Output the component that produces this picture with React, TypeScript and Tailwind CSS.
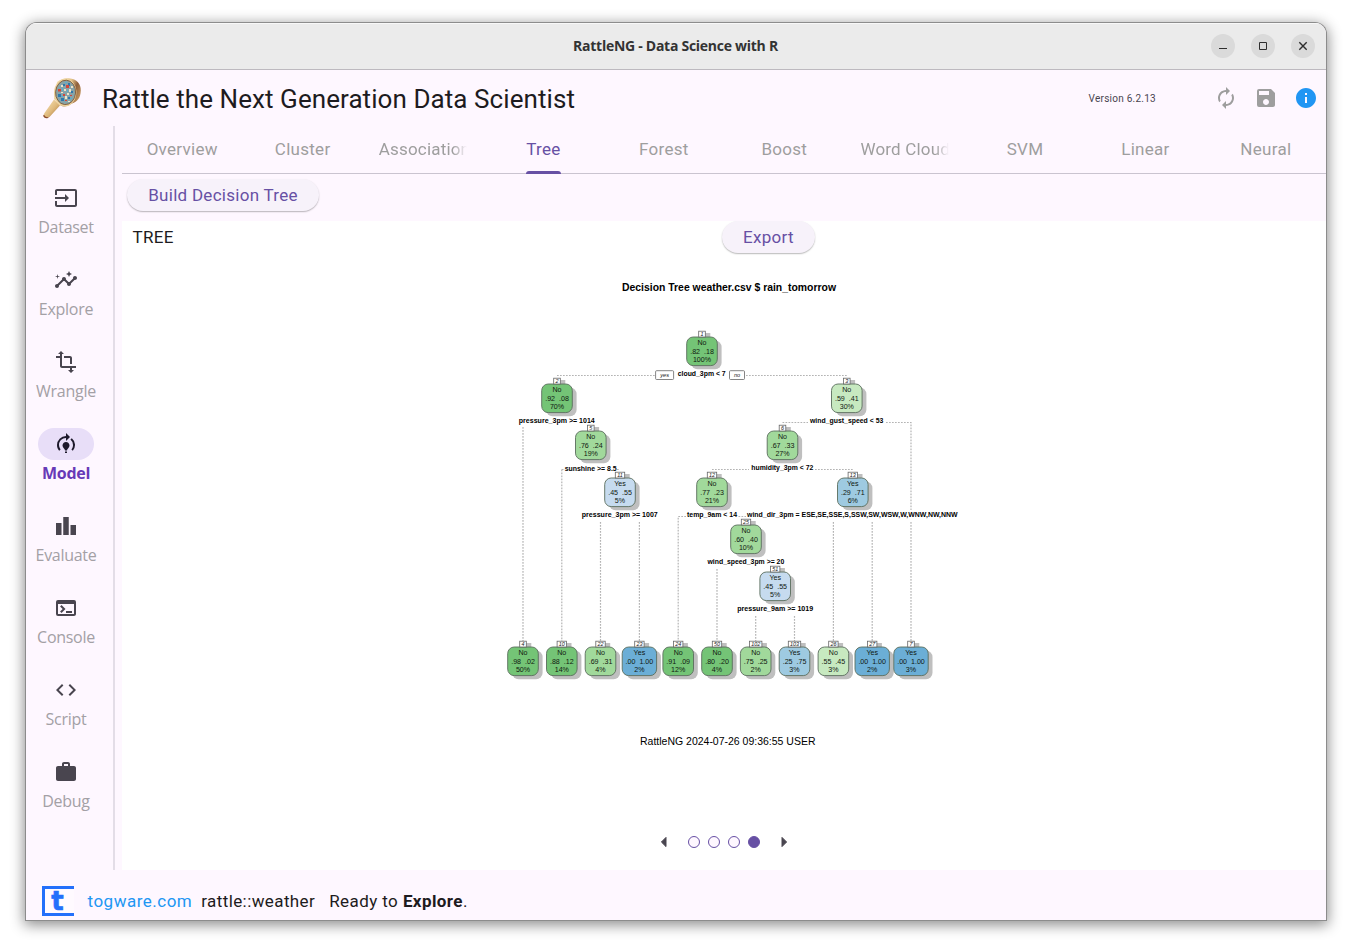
import React from "react";
import type { IconType } from "react-icons";
import {
  MdInput,
  MdInsights,
  MdTransform,
  MdModelTraining,
  MdLeaderboard,
  MdTerminal,
  MdCode,
  MdWork,
  MdAutorenew,
  MdSave,
  MdInfo,
} from "react-icons/md";

const rail: { label: string; icon: IconType; active?: boolean }[] = [
  { label: "Dataset", icon: MdInput },
  { label: "Explore", icon: MdInsights },
  { label: "Wrangle", icon: MdTransform },
  { label: "Model", icon: MdModelTraining, active: true },
  { label: "Evaluate", icon: MdLeaderboard },
  { label: "Console", icon: MdTerminal },
  { label: "Script", icon: MdCode },
  { label: "Debug", icon: MdWork },
];

const tabs = ["Overview", "Cluster", "Association", "Tree", "Forest", "Boost", "Word Cloud", "SVM", "Linear", "Neural"];

const G1 = "#74c476";
const G2 = "#a1d99b";
const G3 = "#c7e9c0";
const B1 = "#6baed6";
const B2 = "#9ecae1";
const B3 = "#c6dbef";

type TreeNode = { id: string; x: number; y: number; cls: string; prob: string; pct: string; fill: string; wide?: boolean };

const nodes: TreeNode[] = [
  { id: "1", x: 702, y: 337, cls: "No", prob: ".82\u00a0\u00a0.18", pct: "100%", fill: G1 },
  { id: "2", x: 557, y: 384, cls: "No", prob: ".92\u00a0\u00a0.08", pct: "70%", fill: G1 },
  { id: "3", x: 846.8, y: 384, cls: "No", prob: ".59\u00a0\u00a0.41", pct: "30%", fill: G3 },
  { id: "5", x: 590.8, y: 431, cls: "No", prob: ".76\u00a0\u00a0.24", pct: "19%", fill: G2 },
  { id: "6", x: 782.5, y: 431, cls: "No", prob: ".67\u00a0\u00a0.33", pct: "27%", fill: G2 },
  { id: "11", x: 620, y: 478, cls: "Yes", prob: ".45\u00a0\u00a0.55", pct: "5%", fill: B3 },
  { id: "12", x: 712, y: 478, cls: "No", prob: ".77\u00a0\u00a0.23", pct: "21%", fill: G2 },
  { id: "13", x: 852.8, y: 478, cls: "Yes", prob: ".29\u00a0\u00a0.71", pct: "6%", fill: B2 },
  { id: "25", x: 746, y: 525, cls: "No", prob: ".60\u00a0\u00a0.40", pct: "10%", fill: G2 },
  { id: "51", x: 775.2, y: 572, cls: "Yes", prob: ".45\u00a0\u00a0.55", pct: "5%", fill: B3 },
  { id: "4", x: 523, y: 647, cls: "No", prob: ".98\u00a0\u00a0.02", pct: "50%", fill: G1 },
  { id: "10", x: 561.8, y: 647, cls: "No", prob: ".88\u00a0\u00a0.12", pct: "14%", fill: G1 },
  { id: "22", x: 600.5, y: 647, cls: "No", prob: ".69\u00a0\u00a0.31", pct: "4%", fill: G2 },
  { id: "23", x: 639.4, y: 647, cls: "Yes", prob: ".00\u00a0\u00a01.00", pct: "2%", fill: B1, wide: true },
  { id: "24", x: 678.2, y: 647, cls: "No", prob: ".91\u00a0\u00a0.09", pct: "12%", fill: G1 },
  { id: "50", x: 717, y: 647, cls: "No", prob: ".80\u00a0\u00a0.20", pct: "4%", fill: G1 },
  { id: "102", x: 755.7, y: 647, cls: "No", prob: ".75\u00a0\u00a0.25", pct: "2%", fill: G2 },
  { id: "103", x: 794.5, y: 647, cls: "Yes", prob: ".25\u00a0\u00a0.75", pct: "3%", fill: B2 },
  { id: "26", x: 833.4, y: 647, cls: "No", prob: ".55\u00a0\u00a0.45", pct: "3%", fill: G3 },
  { id: "27", x: 872.2, y: 647, cls: "Yes", prob: ".00\u00a0\u00a01.00", pct: "2%", fill: B1, wide: true },
  { id: "7", x: 911, y: 647, cls: "Yes", prob: ".00\u00a0\u00a01.00", pct: "3%", fill: B1, wide: true },
];

const splits = [
  { text: "cloud_3pm < 7", x: 677.7, y: 376.3, w: 48 },
  { text: "pressure_3pm >= 1014", x: 518.8, y: 423, w: 76 },
  { text: "wind_gust_speed < 53", x: 810, y: 423.2, w: 73.3 },
  { text: "sunshine >= 8.5", x: 564.7, y: 470.7, w: 52 },
  { text: "humidity_3pm < 72", x: 751.3, y: 470.3, w: 62 },
  { text: "pressure_3pm >= 1007", x: 581.8, y: 517, w: 76 },
  { text: "temp_9am < 14", x: 687, y: 517, w: 50 },
  { text: "wind_dir_3pm = ESE,SE,SSE,S,SSW,SW,WSW,W,WNW,NW,NNW", x: 747, y: 517.2, w: 210.6 },
  { text: "wind_speed_3pm >= 20", x: 707.5, y: 564.3, w: 76.7 },
  { text: "pressure_9am >= 1019", x: 737.2, y: 611, w: 76 },
];

const edges = [
  "M557 375.5H655",
  "M746 375.5H847",
  "M523 427V641",
  "M782.5 422.5H808",
  "M886 422.5H911V510",
  "M911 522V641",
  "M561.8 469.5V641",
  "M561.8 469.5H565",
  "M617 469.5H620",
  "M712 469.5H749",
  "M815 469.5H853",
  "M600.5 522V641",
  "M639.4 522V641",
  "M686 516.5H678.2V641",
  "M738.5 516.5H746",
  "M833.4 522V641",
  "M872.2 522V641",
  "M717 569V641",
  "M755.7 616V641",
  "M794.5 616V641",
];

function TreePlot() {
  return (
    <svg width="1204" height="490" viewBox="122 270 1204 490" fontFamily="'Liberation Sans', Arial, sans-serif" className="block">
      <text x="622" y="291" fontSize="10.6" fontWeight="700" textLength="214" lengthAdjust="spacingAndGlyphs">
        Decision Tree weather.csv $ rain_tomorrow
      </text>
      <g fill="none" stroke="#b4b4b4" strokeWidth="1.2" strokeDasharray="1.7 1.3">
        {edges.map((d) => (
          <path key={d} d={d} />
        ))}
      </g>
      {nodes.map((n) => {
        const w = n.wide ? 34.4 : 30.6;
        const tag = n.id.length === 1 ? 6.6 : n.id.length === 2 ? 9.4 : 12.4;
        return (
          <g key={n.id} textAnchor="middle">
            <rect x={n.x - w / 2 + 4.3} y={n.y + 3.6} width={w} height="28.6" rx="6.5" fill="#bfbfbf" />
            <rect x={n.x - tag / 2 + 5} y={n.y - 4} width={tag} height="5" fill="#bfbfbf" />
            <rect x={n.x - w / 2} y={n.y} width={w} height="28.6" rx="6.5" fill={n.fill} stroke="#5a6d5c" strokeWidth="0.9" />
            <rect x={n.x - tag / 2} y={n.y - 5.8} width={tag} height="5.8" fill="#fff" stroke="#666" strokeWidth="0.8" />
            <text x={n.x} y={n.y - 1} fontSize="5.4" fontStyle="italic" fill="#222">
              {n.id}
            </text>
            <g fontSize="7.1" fill="#101810">
              <text x={n.x} y={n.y + 8.2}>{n.cls}</text>
              <text x={n.x} y={n.y + 16.6}>{n.prob}</text>
              <text x={n.x} y={n.y + 24.9}>{n.pct}</text>
            </g>
          </g>
        );
      })}
      {[
        { t: "yes", x: 655.6, w: 18 },
        { t: "no", x: 729.5, w: 15 },
      ].map((b) => (
        <g key={b.t}>
          <rect x={b.x} y="370.7" width={b.w} height="8.8" rx="1" fill="#fff" stroke="#666" strokeWidth="0.8" />
          <text x={b.x + b.w / 2} y="376.6" fontSize="5.6" fontStyle="italic" textAnchor="middle" fill="#222">
            {b.t}
          </text>
        </g>
      ))}
      <g fontSize="6.9" fontWeight="700">
        {splits.map((s) => (
          <text key={s.text} x={s.x} y={s.y} textLength={s.w} lengthAdjust="spacingAndGlyphs">
            {s.text}
          </text>
        ))}
      </g>
      <text x="640" y="745" fontSize="10.6" textLength="175.5" lengthAdjust="spacingAndGlyphs">
        RattleNG 2024-07-26 09:36:55 USER
      </text>
    </svg>
  );
}

function Magnifier() {
  return (
    <svg width="40" height="42" viewBox="42 77 40 42">
      <defs>
        <linearGradient id="rim" x1="0" y1="0" x2="1" y2="0.5">
          <stop offset="0" stopColor="#f6e6bf" />
          <stop offset="0.55" stopColor="#e3c388" />
          <stop offset="0.78" stopColor="#8d5f3b" />
          <stop offset="1" stopColor="#bb8d58" />
        </linearGradient>
        <linearGradient id="grip" x1="0" y1="0" x2="1" y2="1">
          <stop offset="0" stopColor="#fbeac2" />
          <stop offset="0.55" stopColor="#dfb97c" />
          <stop offset="1" stopColor="#95652f" />
        </linearGradient>
      </defs>
      <path d="M54 99.5L60 105.5L49.5 117Q46 118.8 43.8 116.6Q42.8 114.6 45 112.3Z" fill="url(#grip)" />
      <path d="M44 114.8Q45.5 117.8 49 117.3L47.4 118.3Q43.8 118.8 43.2 115.6Z" fill="#8c4b2c" />
      <path d="M57 82Q62 77.6 69 78.3C77 79 81 84 80.8 90.5C80.5 98 77.5 101.5 72 103.6Q65 108 60.5 105.6L54 99Z" fill="url(#rim)" />
      <ellipse cx="65.2" cy="92.6" rx="11.2" ry="13.8" transform="rotate(4 65.2 92.6)" fill="#ecd19b" />
      <ellipse cx="65.6" cy="92.4" rx="10" ry="12.2" transform="rotate(4 65.6 92.4)" fill="#87a3a8" stroke="#7d5a38" strokeWidth="0.9" />
      <g fill="#2f78ad">
        <path d="M58 94h3v3h-3zM61 98h3v3h-3zM68 83h2v3h-2zM63 84h2v2h-2zM71 91h2v2h-2zM68 97h2v2h-2z" />
      </g>
      <g fill="#d2463a">
        <path d="M58 89h3v2.5h-3zM66 85h3v3h-3zM63 94h2v2h-2zM70 95h2v1h-2zM65 100h2v1h-2z" />
      </g>
      <g fill="#eee3c9">
        <path d="M61 85h2v2h-2zM64 89h2v2h-2zM69 89h2v3h-2zM65 96h2v3h-2zM71 86h2v2h-2zM61 92h2v1h-2zM68 101h2v1h-2zM67 93h2v2h-2z" />
      </g>
      <g fill="#55b0d4">
        <path d="M62 88h1v3h-1zM67 90h1v2h-1zM61 96h2v1h-2zM70 98h2v1h-2zM65 82h2v1h-2z" />
      </g>
    </svg>
  );
}

function PagerArrow({ d }: { d: string }) {
  return (
    <svg width="24" height="24" viewBox="0 0 24 24" fill="#49454f" stroke="#49454f" strokeWidth="1" strokeLinejoin="round">
      <path d={d} />
    </svg>
  );
}

function WindowButton({ children }: { children: React.ReactNode }) {
  return (
    <div className="flex size-6 items-center justify-center rounded-full bg-[#dadada]">
      <svg width="24" height="24" viewBox="0 0 24 24" fill="none" stroke="#2e2e2e">
        {children}
      </svg>
    </div>
  );
}

function TitleBar() {
  return (
    <div className="flex h-[47px] shrink-0 items-center border-b border-[#bdb9bf] bg-[#ebebeb] pr-[11px] shadow-[inset_0_1px_0_#f8f8f8]">
      <div className="w-[114px]" />
      <div className="flex-1 pb-[2px] text-center font-['Open_Sans','Noto_Sans',sans-serif] text-[14px] font-bold tracking-[-0.27px] text-[#333]">
        RattleNG - Data Science with R
      </div>
      <div className="flex w-[104px] gap-4">
        <WindowButton>
          <path d="M8 14.5h8" />
        </WindowButton>
        <WindowButton>
          <path d="M8.5 8.5h7v7h-7z" />
        </WindowButton>
        <WindowButton>
          <path d="M8.3 8.3l7.4 7.4M15.7 8.3l-7.4 7.4" strokeWidth="1.4" />
        </WindowButton>
      </div>
    </div>
  );
}

export default function App() {
  return (
    <div className="h-[949px] w-[1352px] overflow-hidden bg-white px-[26px] pt-[23px] font-[Roboto,sans-serif] text-[#1d1b20]">
      <div className="flex h-[897px] w-[1300px] flex-col overflow-hidden rounded-t-[11px] bg-[#fef7ff] shadow-[0_0_0_1px_#8c8c8c,0_3px_14px_2px_rgba(0,0,0,0.45)]">
        <TitleBar />
        <header className="flex h-14 shrink-0 items-center pr-2 pl-4">
          <Magnifier />
          <h1 className="ml-5 flex-1 pt-[2px] text-[26px] leading-8 tracking-[0.07px] whitespace-nowrap">
            Rattle the Next Generation Data Scientist
          </h1>
          <span className="mr-[58px] text-[10px] tracking-[0.25px] whitespace-nowrap text-[#49454f]">Version 6.2.13</span>
          <div className="flex items-center gap-4">
            <MdAutorenew size={24} color="#9e9e9e" />
            <MdSave size={24} color="#9e9e9e" />
            <MdInfo size={24} color="#2196f3" />
          </div>
        </header>
        <div className="flex h-[744px] shrink-0">
          <nav className="flex w-[89px] shrink-0 flex-col border-r-2 border-[#e3dde7] pt-14 pr-[7px]">
            {rail.map(({ label, icon: Icon, active }) => (
              <div key={label} className="flex h-[82px] shrink-0 flex-col items-center">
                <div className={`flex h-8 w-14 items-center justify-center rounded-full ${active ? "bg-[#e8def8] text-[#1d192b]" : "text-[#49454f]"}`}>
                  <Icon size={24} />
                </div>
                <span
                  className={`mt-[3px] font-['Open_Sans','Noto_Sans',sans-serif] text-[16px] leading-5 ${active ? "font-bold tracking-[-0.3px] text-[#673ab7]" : "font-normal tracking-[-0.28px] text-[#a3a0a5]"}`}
                >
                  {label}
                </span>
              </div>
            ))}
          </nav>
          <main className="ml-[7px] flex w-[1204px] flex-col">
            <div className="flex h-12 shrink-0 border-b border-[#cac4d0]">
              {tabs.map((tab) => {
                const active = tab === "Tree";
                const fades = tab === "Association" || tab === "Word Cloud";
                return (
                  <div key={tab} className={`flex min-w-0 flex-1 px-4 ${fades ? "justify-start" : "justify-center"}`}>
                    <div className={`flex h-12 flex-col ${fades ? "w-full overflow-hidden [mask-image:linear-gradient(to_right,#000_84%,transparent)]" : ""}`}>
                      <span
                        className={`h-[45px] text-[17px] leading-[47px] whitespace-nowrap ${fades ? "tracking-[0.18px]" : "tracking-[0.28px]"} ${active ? "text-[#6750a4]" : "text-[#9e9e9e]"}`}
                      >
                        {tab}
                      </span>
                      {active && <span className="h-[3px] rounded-t-[3px] bg-[#6750a4]" />}
                    </div>
                  </div>
                );
              })}
            </div>
            <div className="h-[47px] shrink-0 pt-[5px] pl-[5px]">
              <button className="h-8 w-48 rounded-full bg-[#f7f2fa] text-[17px] leading-8 tracking-[0.28px] text-[#6750a4] shadow-[0_1px_1.5px_rgba(0,0,0,0.28)]">
                Build Decision Tree
              </button>
            </div>
            <section className="flex flex-1 flex-col bg-white">
              <div className="flex h-[49px] shrink-0">
                <div className="w-[600px] pl-[10.5px] text-[17px] leading-8 tracking-[0.3px]">TREE</div>
                <button className="h-8 w-[93px] rounded-full bg-[#f7f2fa] text-[17px] leading-8 tracking-[0.28px] text-[#6750a4] shadow-[0_1px_1.5px_rgba(0,0,0,0.28)]">
                  Export
                </button>
              </div>
              <TreePlot />
              <div className="mt-[70px] flex h-6 items-center justify-center">
                <PagerArrow d="M14 7.4L9.4 12l4.6 4.6z" />
                <div className="mx-3 flex gap-2">
                  {[0, 1, 2, 3].map((i) => (
                    <span key={i} className={`size-3 rounded-full border border-[#6750a4] ${i === 3 ? "bg-[#6750a4]" : "bg-[#fef7ff]"}`} />
                  ))}
                </div>
                <PagerArrow d="M10 7.4l4.6 4.6-4.6 4.6z" />
              </div>
            </section>
          </main>
        </div>
        <footer className="flex flex-1 items-center pt-[12px] pl-4 text-[17px] tracking-[0.5px] whitespace-nowrap">
          <div className="flex h-[30px] w-8 items-center justify-center border-3 border-r-0 border-[#2370fb] bg-[#fffaff] pr-[4px]">
            <span className="font-['DejaVu_Sans',sans-serif] text-[26px] leading-6 font-bold tracking-normal text-[#2370fb] [-webkit-text-stroke:0.6px_#2370fb]">
              t
            </span>
          </div>
          <span className="ml-[13.5px] pt-[2px]">
            <span className="text-[#2196f3]">togware.com</span>
          </span>
          <span className="ml-[9px] pt-[2px] tracking-[0.4px]">rattle::weather</span>
          <span className="ml-[14px] pt-[2px] tracking-[0.42px]">
            Ready to <b>Explore</b>.
          </span>
        </footer>
      </div>
    </div>
  );
}
